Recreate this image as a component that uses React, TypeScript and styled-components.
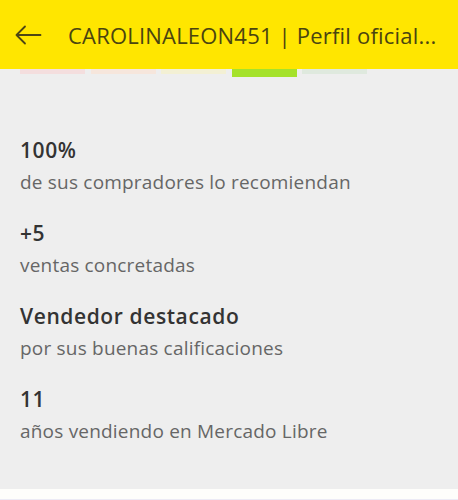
import styled, { createGlobalStyle } from 'styled-components';

const GlobalStyle = createGlobalStyle`
  html, body {
    margin: 0;
    padding: 0;
    background: #fefefb;
  }
  body {
    font-family: 'Open Sans', 'Liberation Sans', sans-serif;
    -webkit-font-smoothing: antialiased;
  }
`;

const Page = styled.div`
  width: 458px;
  display: flex;
  flex-direction: column;
`;

const Header = styled.header`
  height: 69px;
  background: #ffe600;
  display: flex;
  align-items: center;
  padding-left: 14px;
  gap: 25px;
  box-sizing: border-box;
`;

const BackButton = styled.button`
  border: 0;
  background: transparent;
  padding: 0;
  width: 29px;
  height: 28px;
  display: flex;
  align-items: center;
  justify-content: center;
  color: #4d4614;
`;

const Title = styled.h1`
  margin: 0;
  font-size: 22px;
  font-weight: 400;
  letter-spacing: 0.2px;
  color: #4a4410;
  white-space: nowrap;
  overflow: hidden;
  flex: 1;
  padding-right: 14px;
`;

const Body = styled.main`
  background: #eeeeee;
  height: 420px;
  display: flex;
  flex-direction: column;
`;

const Thermometer = styled.div`
  display: flex;
  gap: 5.5px;
  padding-left: 20px;
  align-items: flex-start;
`;

const Level = styled.span<{ $color: string; $active?: boolean }>`
  width: 65px;
  height: ${(p) => (p.$active ? '8px' : '5px')};
  background: ${(p) => p.$color};
`;

const Stats = styled.ul`
  list-style: none;
  margin: 0;
  padding: 60px 20px 0;
  display: flex;
  flex-direction: column;
  gap: 25px;
`;

const Stat = styled.li`
  display: flex;
  flex-direction: column;
  gap: 6px;
`;

const StatValue = styled.strong`
  font-size: 21px;
  font-weight: 600;
  letter-spacing: 0.6px;
  color: #333333;
  line-height: 26px;
`;

const StatLabel = styled.span`
  font-size: 19px;
  letter-spacing: 0.2px;
  color: #666666;
  line-height: 26px;
`;

const Footer = styled.div`
  height: 10px;
  background: #fefefb;
  border-bottom: 1px solid #ecebf5;
`;

const levels = [
  { color: '#f4dede' },
  { color: '#f6e6dc' },
  { color: '#f3f0d4' },
  { color: '#a5e22b', active: true },
  { color: '#dfe9de' },
];

const stats = [
  { value: '100%', label: 'de sus compradores lo recomiendan' },
  { value: '+5', label: 'ventas concretadas' },
  { value: 'Vendedor destacado', label: 'por sus buenas calificaciones' },
  { value: '11', label: 'años vendiendo en Mercado Libre' },
];

export default function App() {
  return (
    <Page>
      <GlobalStyle />
      <Header>
        <BackButton aria-label="Volver">
          <svg width="29" height="28" viewBox="0 0 29 28" fill="none" stroke="currentColor" strokeWidth="1.8" strokeLinecap="round">
            <path d="M2.5 14h24M2.5 14l8.5-8.5M2.5 14l8.5 8.5" />
          </svg>
        </BackButton>
        <Title>CAROLINALEON451 | Perfil oficial...</Title>
      </Header>
      <Body>
        <Thermometer>
          {levels.map((l, i) => (
            <Level key={i} $color={l.color} $active={l.active} />
          ))}
        </Thermometer>
        <Stats>
          {stats.map((s) => (
            <Stat key={s.value}>
              <StatValue>{s.value}</StatValue>
              <StatLabel>{s.label}</StatLabel>
            </Stat>
          ))}
        </Stats>
      </Body>
      <Footer />
    </Page>
  );
}
